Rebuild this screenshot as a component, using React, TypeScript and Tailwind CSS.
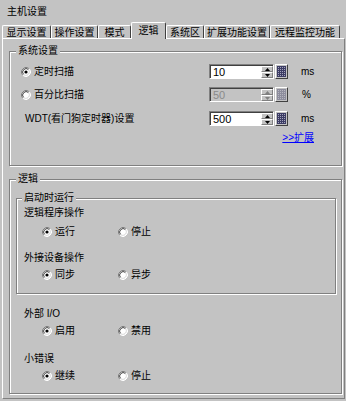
import React from 'react';

const tabs = [
    { label: '显示设置', w: 'w-[49px]' },
    { label: '操作设置', w: 'w-[47px]' },
    { label: '模式', w: 'w-[33px]' },
    { label: '逻辑', w: 'w-[35px]', active: true },
    { label: '系统区', w: 'w-[38px]' },
    { label: '扩展功能设置', w: 'w-[66px]' },
    { label: '远程监控功能', w: 'w-[70px]' },
];

const Radio: React.FC<{ checked?: boolean }> = ({ checked }) => (
    <svg width="10" height="10" viewBox="0 0 10 10" className="shrink-0">
        <circle cx="5" cy="5" r="4" fill="#fff" />
        <path d="M1.82 8.18 A4.5 4.5 0 0 1 8.18 1.82" fill="none" stroke="#808080" />
        <path d="M8.18 1.82 A4.5 4.5 0 0 1 1.82 8.18" fill="none" stroke="#fff" />
        <path d="M2.53 7.47 A3.5 3.5 0 0 1 7.47 2.53" fill="none" stroke="#404040" />
        <path d="M7.47 2.53 A3.5 3.5 0 0 1 2.53 7.47" fill="none" stroke="#dcdcdc" />
        {checked && <circle cx="5" cy="5" r="1.6" fill="#000" />}
    </svg>
);

const Option: React.FC<{ label: string; checked?: boolean; w?: string }> = ({ label, checked, w }) => (
    <div className={`flex items-center gap-[3px] ${w ?? ''}`}>
        <Radio checked={checked} />
        <span>{label}</span>
    </div>
);

const Arrow: React.FC<{ up?: boolean; disabled?: boolean }> = ({ up, disabled }) => (
    <svg width="5" height="3" viewBox="0 0 5 3">
        <path d={up ? 'M0 3 L2.5 0 L5 3 Z' : 'M0 0 L2.5 3 L5 0 Z'} fill={disabled ? '#808080' : '#000'} />
    </svg>
);

const Keypad: React.FC<{ disabled?: boolean }> = ({ disabled }) => (
    <div className="ml-[1px] w-[13px] h-[15px] flex items-center justify-center bg-[#c3c3c3] border-t border-l border-t-white border-l-white border-b border-r border-b-[#404040] border-r-[#404040]">
        <svg width="9" height="11" viewBox="0 0 9 11" opacity={disabled ? 0.4 : 1}>
            <rect x="0" y="0" width="9" height="11" fill="#a4a4bc" />
            {[0, 2, 4, 6, 8].map((x) => (
                <rect key={'v' + x} x={x} y="0" width="1" height="11" fill="#3c3c64" />
            ))}
            {[0, 2, 4, 6, 8, 10].map((y) => (
                <rect key={'h' + y} x="0" y={y} width="9" height="1" fill="#3c3c64" />
            ))}
        </svg>
    </div>
);

const SpinField: React.FC<{ value: string; disabled?: boolean }> = ({ value, disabled }) => (
    <div className="flex items-center h-[15px]">
        <div
            className={`flex w-[65px] h-[15px] border-t border-l border-t-[#808080] border-l-[#808080] border-b border-r border-b-white border-r-white shadow-[inset_1px_1px_0_#404040] ${
                disabled ? 'bg-[#c3c3c3] text-[#8a8a8a]' : 'bg-white text-black'
            }`}
        >
            <span className="flex-1 pl-[3px] pt-[1px] text-[11px] leading-[12px]">{value}</span>
            <div className="w-[12px] flex flex-col pt-[1px]">
                <div className="flex-1 flex items-center justify-center bg-[#c3c3c3] border-t border-l border-t-white border-l-white border-b border-r border-b-[#808080] border-r-[#808080]">
                    <Arrow up disabled={disabled} />
                </div>
                <div className="flex-1 flex items-center justify-center bg-[#c3c3c3] border-t border-l border-t-white border-l-white border-b border-r border-b-[#808080] border-r-[#808080]">
                    <Arrow disabled={disabled} />
                </div>
            </div>
        </div>
        <Keypad disabled={disabled} />
    </div>
);

const groupBox = 'border border-[#808080] shadow-[inset_1px_1px_0_#fff,1px_1px_0_#fff]';

export default function App() {
    return (
        <div className="w-[346px] h-[401px] bg-[#c3c3c3] text-black text-[10px] leading-[12px] font-['Liberation_Sans','Noto_Sans_CJK_SC',sans-serif] overflow-hidden">
            <div className="h-[22px] pl-[7px] pt-[6px]">主机设置</div>

            <div className="h-[16px] pl-[2px] flex items-end">
                {tabs.map((t) => (
                    <div
                        key={t.label}
                        className={`${t.w} flex items-center justify-center rounded-t-[2px] bg-[#c3c3c3] border-t border-l border-r border-t-white border-l-white border-r-[#404040] ${
                            t.active ? 'h-[17px] -mb-px relative z-10 pb-[1px]' : 'h-[13px] pt-[1px]'
                        }`}
                    >
                        {t.label}
                    </div>
                ))}
            </div>

            <div className="ml-[2px] w-[343px] h-[361px] border-t border-l border-t-white border-l-white border-r border-b border-r-[#808080] border-b-[#808080]">
                <fieldset className={`ml-[6px] mt-[6px] w-[333px] h-[121px] ${groupBox}`}>
                    <legend className="ml-[6px] px-[2px] bg-[#c3c3c3]">系统设置</legend>

                    <div className="flex items-center h-[15px] mt-[7px] pl-[11px]">
                        <div className="w-[188px]">
                            <Option label="定时扫描" checked />
                        </div>
                        <SpinField value="10" />
                        <span className="ml-[13px]">ms</span>
                    </div>

                    <div className="flex items-center h-[15px] mt-[8px] pl-[11px]">
                        <div className="w-[188px]">
                            <Option label="百分比扫描" />
                        </div>
                        <SpinField value="50" disabled />
                        <span className="ml-[14px]">%</span>
                    </div>

                    <div className="flex items-center h-[15px] mt-[9px] pl-[11px]">
                        <div className="w-[188px] pl-[4px]">WDT(看门狗定时器)设置</div>
                        <SpinField value="500" />
                        <span className="ml-[13px]">ms</span>
                    </div>

                    <div className="flex justify-end h-[14px] mt-[5px] pr-[27px] items-center">
                        <span className="text-[#0000ff] underline">&gt;&gt;扩展</span>
                    </div>
                </fieldset>

                <fieldset className={`ml-[6px] mt-[7px] w-[333px] h-[221px] ${groupBox}`}>
                    <legend className="ml-[6px] px-[2px] bg-[#c3c3c3]">逻辑</legend>

                    <fieldset className={`ml-[6px] mt-[7px] w-[320px] h-[102px] ${groupBox}`}>
                        <legend className="ml-[5px] px-[2px] bg-[#c3c3c3]">启动时运行</legend>
                        <div className="pl-[7px]">
                            <div className="mt-[3px]">逻辑程序操作</div>
                            <div className="flex mt-[7px] pl-[18px]">
                                <Option label="运行" checked w="w-[76px]" />
                                <Option label="停止" />
                            </div>
                            <div className="mt-[14px]">外接设备操作</div>
                            <div className="flex mt-[5px] pl-[18px]">
                                <Option label="同步" checked w="w-[76px]" />
                                <Option label="异步" />
                            </div>
                        </div>
                    </fieldset>

                    <div className="pl-[14px]">
                        <div className="mt-[14px]">外部 I/O</div>
                        <div className="flex mt-[5px] pl-[18px]">
                            <Option label="启用" checked w="w-[76px]" />
                            <Option label="禁用" />
                        </div>
                        <div className="mt-[16px]">小错误</div>
                        <div className="flex mt-[5px] pl-[18px]">
                            <Option label="继续" checked w="w-[76px]" />
                            <Option label="停止" />
                        </div>
                    </div>
                </fieldset>
            </div>
        </div>
    );
}
